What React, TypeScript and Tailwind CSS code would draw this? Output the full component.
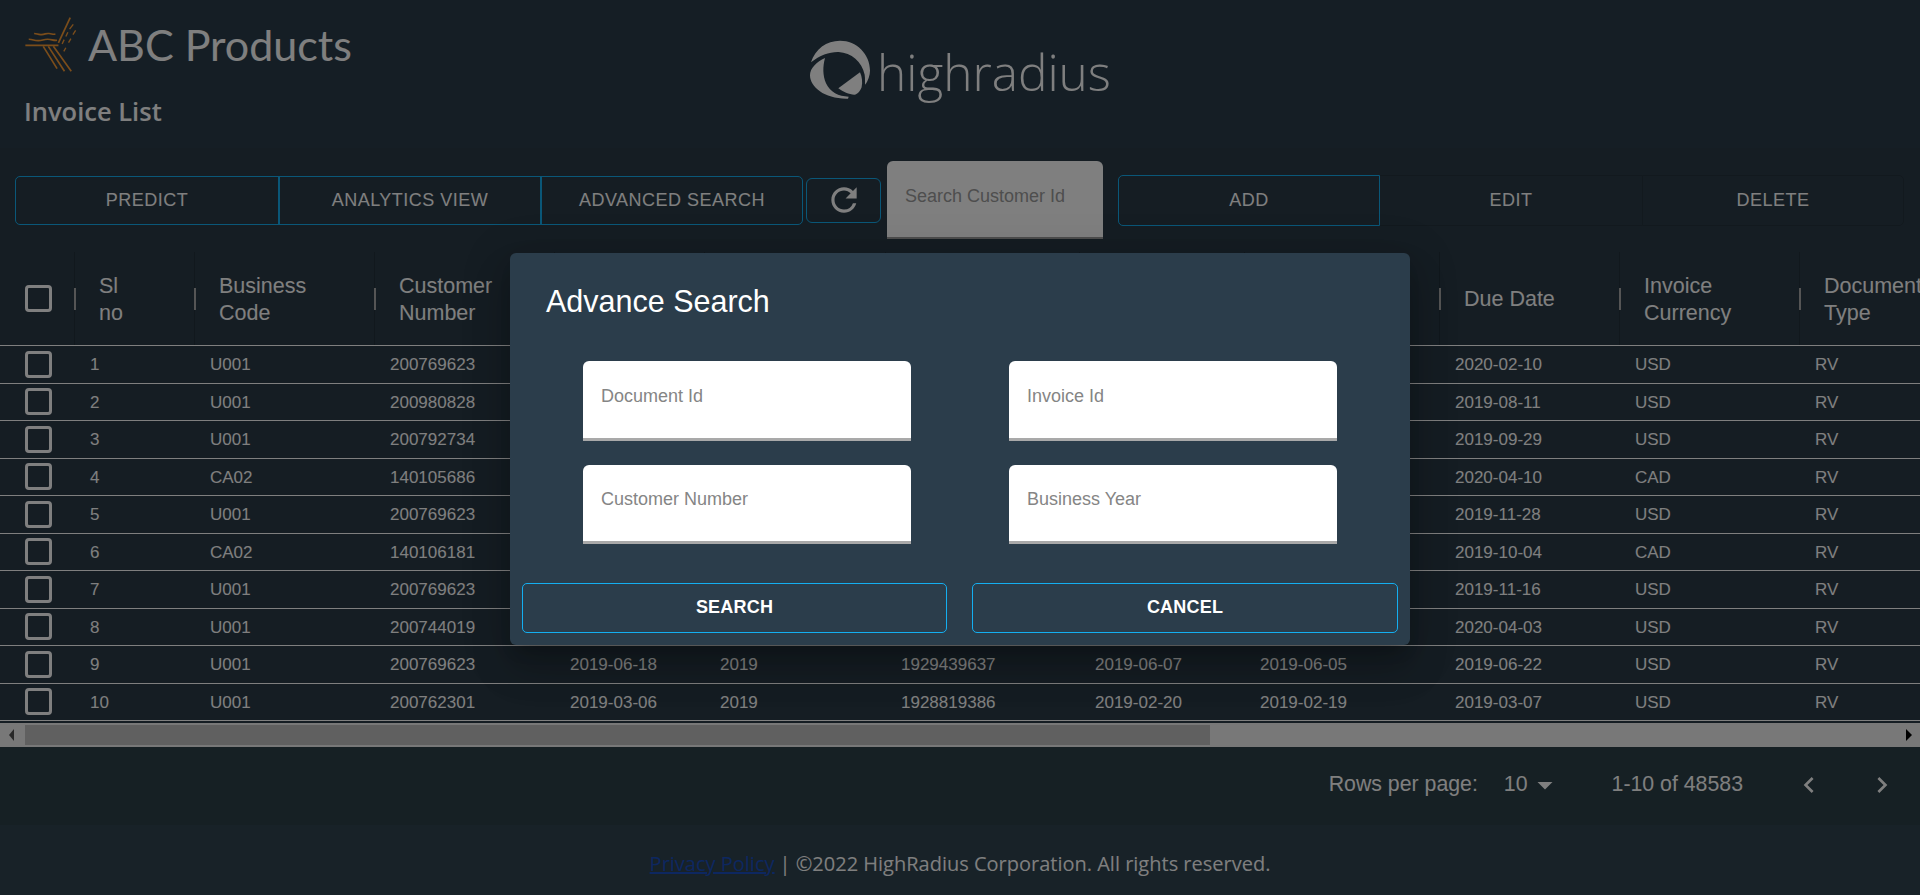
import { MdRefresh, MdKeyboardArrowLeft, MdKeyboardArrowRight, MdArrowDropDown } from 'react-icons/md';

interface Row {
  id: number;
  code: string;
  customer: string;
  clearDate?: string;
  year?: string;
  docId?: string;
  postingDate?: string;
  docDate?: string;
  dueDate: string;
  currency: string;
}

const rows: Row[] = [
  { id: 1, code: 'U001', customer: '200769623', dueDate: '2020-02-10', currency: 'USD' },
  { id: 2, code: 'U001', customer: '200980828', dueDate: '2019-08-11', currency: 'USD' },
  { id: 3, code: 'U001', customer: '200792734', dueDate: '2019-09-29', currency: 'USD' },
  { id: 4, code: 'CA02', customer: '140105686', dueDate: '2020-04-10', currency: 'CAD' },
  { id: 5, code: 'U001', customer: '200769623', dueDate: '2019-11-28', currency: 'USD' },
  { id: 6, code: 'CA02', customer: '140106181', dueDate: '2019-10-04', currency: 'CAD' },
  { id: 7, code: 'U001', customer: '200769623', dueDate: '2019-11-16', currency: 'USD' },
  { id: 8, code: 'U001', customer: '200744019', dueDate: '2020-04-03', currency: 'USD' },
  { id: 9, code: 'U001', customer: '200769623', clearDate: '2019-06-18', year: '2019', docId: '1929439637', postingDate: '2019-06-07', docDate: '2019-06-05', dueDate: '2019-06-22', currency: 'USD' },
  { id: 10, code: 'U001', customer: '200762301', clearDate: '2019-03-06', year: '2019', docId: '1928819386', postingDate: '2019-02-20', docDate: '2019-02-19', dueDate: '2019-03-07', currency: 'USD' },
];

const headers: string[][] = [
  ['Sl', 'no'],
  ['Business', 'Code'],
  ['Customer', 'Number'],
  [],
  [],
  [],
  [],
  [],
  ['Due Date'],
  ['Invoice', 'Currency'],
  ['Document', 'Type'],
];

const gridCols = 'grid grid-cols-[74px_120px_180px_180px_150px_181px_194px_165px_195px_180px_180px_180px]';

function AbcLogo() {
  return (
    <svg width="54" height="56" viewBox="70 48 156 166" fill="none" stroke="#f79a35" strokeWidth="5" className="shrink-0">
      <path d="M72 132H170" />
      <path d="M82 114c14 0 14 4 28 4s14-4 28-4 14 4 28 3" />
      <path d="M98 97c10 0 10 4 22 3s12-4 22-3 10 3 19 2" />
      <path d="M125 135l41 66M140 135l48 74M155 135l53 74" />
      <path d="M170 125l35-75" />
      <path d="M181 128l6-13M192 106l6-13M203 84l11-14" strokeWidth="4" />
      <path d="M186 150l6-11M200 124l7-12M213 100l8-12" strokeWidth="4" />
    </svg>
  );
}

function RadiusMark() {
  return (
    <svg width="62" height="60" viewBox="58 58 184 180" fill="#ffffff" className="shrink-0">
      <path d="M63 125C75 85 110 60 150 60c50 0 90 40 90 90 0 14-6 30-14 42-2-6 0-18-2-30-8-38-40-66-78-68-26-1-56 9-83 31z" />
      <path d="M105 112c-25 12-45 30-45 52 0 36 46 72 114 70l2-6c-30 0-56-14-68-40-10-24-10-50-3-76z" />
      <path d="M145 203l65-48c6 14 8 30 5 44-3 10-12 22-22 23-16 0-34-9-48-19z" />
    </svg>
  );
}

function ToolbarButton({ label, className }: { label: string; className: string }) {
  return (
    <button className={`flex h-full w-[262px] items-center justify-center text-[18px] tracking-[0.5px] text-white ${className}`}>
      {label}
    </button>
  );
}

function Checkbox() {
  return <span className="block h-[27px] w-[27px] rounded-[4px] border-[3px] border-white" />;
}

function Cell({ children }: { children?: React.ReactNode }) {
  return <div className="truncate pl-4 pt-px text-[17px] text-white">{children}</div>;
}

function SearchField({ placeholder }: { placeholder: string }) {
  return (
    <input
      placeholder={placeholder}
      className="h-[79.5px] w-[328px] rounded-t-[6px] border-b-[3px] border-[#a9a9a9] bg-white pb-[6px] pl-[18px] text-[18px] placeholder:text-[#858585]"
    />
  );
}

export default function App() {
  return (
    <div className="relative flex h-[895px] w-full flex-col overflow-hidden bg-[#2b3b47] font-['Liberation_Sans',Arial,sans-serif]">
      <header className="grid h-[148px] grid-cols-3 bg-[#2a3d4b]">
        <div className="pl-[24px] pt-[17px]">
          <div className="flex items-center gap-[10px]">
            <AbcLogo />
            <span className="font-['Lato',sans-serif] text-[43px] leading-[56px] text-white">ABC Products</span>
          </div>
          <h1 className="mt-[20px] font-['Open_Sans',sans-serif] text-[25.5px] font-semibold leading-[36px] text-white">Invoice List</h1>
        </div>
        <div className="flex items-start justify-center pt-[40px]">
          <RadiusMark />
          <span className="ml-[6px] mt-[2px] font-['Open_Sans',sans-serif] text-[49.5px] font-light leading-[60px] text-white">highradius</span>
        </div>
      </header>

      <div className="flex h-[104px] shrink-0 items-center pl-[15px]">
        <div className="flex h-[49px] rounded-[5px] border border-[#14aff1]">
          <ToolbarButton label="PREDICT" className="" />
          <ToolbarButton label="ANALYTICS VIEW" className="border-l-2 border-[#14aff1]" />
          <ToolbarButton label="ADVANCED SEARCH" className="border-l-2 border-[#14aff1]" />
        </div>
        <button className="ml-[3px] flex h-[45px] w-[75px] items-center justify-center rounded-[6px] border border-[#14aff1] text-white">
          <MdRefresh size={38} />
        </button>
        <div className="ml-[6px] h-[78px] w-[216px] rounded-t-[6px] border-b-2 border-[#9a9a9a] bg-white pl-[18px] pt-[22px] text-[18px] text-[#9c9c9c]">
          Search Customer Id
        </div>
        <div className="ml-[15px] flex h-[51px]">
          <ToolbarButton label="ADD" className="rounded-l-[5px] border border-[#14aff1]" />
          <ToolbarButton label="EDIT" className="border-y border-[#25333d]" />
          <ToolbarButton label="DELETE" className="rounded-r-[5px] border border-[#25333d]" />
        </div>
      </div>

      <div className="overflow-hidden">
        <div className={`${gridCols} h-[94px] w-[2000px] border-b border-white`}>
          <div className="flex items-center pl-[25px]">
            <Checkbox />
          </div>
          {headers.map((lines, i) => (
            <div key={i} className="flex items-center border-l border-[#22303a]">
              <span className="ml-[-1px] h-[22px] w-[2px] shrink-0 bg-[#aaaaaa]" />
              <div className="pl-[23px] pt-[2px] text-[21.5px] leading-[27px] text-white">
                {lines.map((line) => (
                  <div key={line} className="whitespace-nowrap">{line}</div>
                ))}
              </div>
            </div>
          ))}
        </div>
        {rows.map((row) => (
          <div key={row.id} className={`${gridCols} h-[37.5px] w-[2000px] items-center border-b border-white`}>
            <div className="pl-[25px]">
              <Checkbox />
            </div>
            <Cell>{row.id}</Cell>
            <Cell>{row.code}</Cell>
            <Cell>{row.customer}</Cell>
            <Cell>{row.clearDate}</Cell>
            <Cell>{row.year}</Cell>
            <Cell>{row.docId}</Cell>
            <Cell>{row.postingDate}</Cell>
            <Cell>{row.docDate}</Cell>
            <Cell>{row.dueDate}</Cell>
            <Cell>{row.currency}</Cell>
            <Cell>RV</Cell>
          </div>
        ))}
      </div>

      <div className="mt-[2px] flex h-[24px] shrink-0 items-center bg-[#f1f1f1]">
        <svg width="25" height="24" viewBox="0 0 25 24" className="shrink-0" fill="#505050">
          <path d="M9 12l5-6v12z" />
        </svg>
        <div className="h-[20px] w-[1185px] bg-[#c1c1c1]" />
        <svg width="25" height="24" viewBox="0 0 25 24" className="ml-auto shrink-0" fill="#000000">
          <path d="M11 6l6 6-6 6z" />
        </svg>
      </div>

      <div className="flex flex-1 items-center justify-end bg-[#2c4049] pb-[2px] text-[21.3px] text-white">
        <span className="mr-[26px]">Rows per page:</span>
        <span>10</span>
        <MdArrowDropDown size={36} className="ml-[-1px]" />
        <span className="ml-[49px]">1-10 of 48583</span>
        <MdKeyboardArrowLeft size={32} className="ml-[50px]" />
        <MdKeyboardArrowRight size={32} className="ml-[41px] mr-[22px]" />
      </div>

      <footer className="flex h-[70px] shrink-0 items-center justify-center bg-[#304450] pt-2 font-['Open_Sans',sans-serif] text-[20px] text-white">
        <a href="#" className="text-[#1a4fc0] underline">Privacy Policy</a>
        <span className="ml-[5px]">| ©2022 HighRadius Corporation. All rights reserved.</span>
      </footer>

      <div className="absolute inset-0 flex items-center justify-center bg-black/50 pt-[3px]">
        <div className="h-[392px] w-[900px] rounded-[6px] bg-[#2b3d4b] shadow-[0_11px_15px_-7px_rgba(0,0,0,0.2),0_24px_38px_3px_rgba(0,0,0,0.14),0_9px_46px_8px_rgba(0,0,0,0.12)]">
          <h2 className="pl-[36px] pt-[31px] text-[30.5px] leading-[34px] text-white">Advance Search</h2>
          <div className="ml-[73px] mt-[43px] grid w-[754px] grid-cols-[328px_328px] justify-between gap-y-[24px]">
            <SearchField placeholder="Document Id" />
            <SearchField placeholder="Invoice Id" />
            <SearchField placeholder="Customer Number" />
            <SearchField placeholder="Business Year" />
          </div>
          <div className="ml-[12px] mt-[39px] flex gap-[25px]">
            <button className="h-[50px] w-[425px] rounded-[5px] border border-[#14aff1] pb-px text-[18px] font-bold tracking-[0.2px] text-white">SEARCH</button>
            <button className="h-[50px] w-[426px] rounded-[5px] border border-[#14aff1] pb-px text-[18px] font-bold tracking-[0.2px] text-white">CANCEL</button>
          </div>
        </div>
      </div>
    </div>
  );
}
